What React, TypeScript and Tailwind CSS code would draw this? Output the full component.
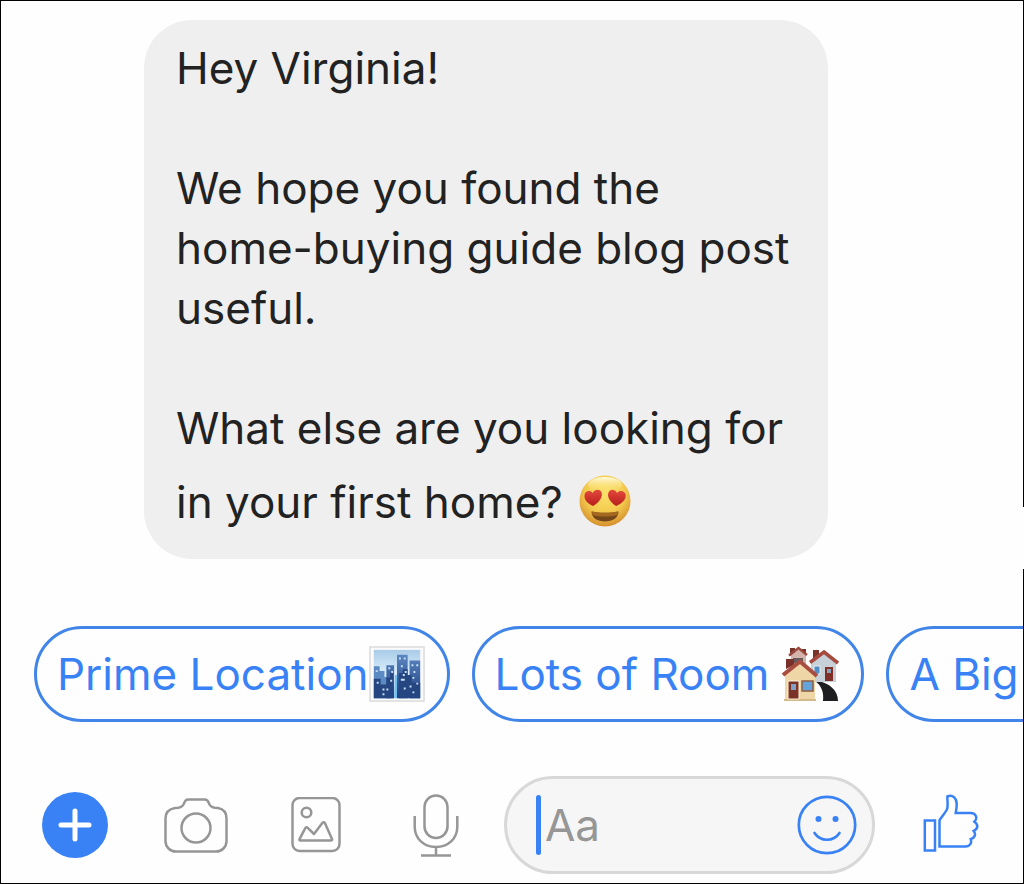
import { useState } from "react";

import type { ReactNode } from "react";

function HeartEyes() {
  return (
    <svg viewBox="0 0 52 52" role="img" aria-label="heart eyes" className="mt-[17px] ml-1 inline-block h-[52px] w-[52px] align-[-9px]">
      <defs>
        <radialGradient id="face" cx="50%" cy="35%" r="65%">
          <stop offset="0" stopColor="#fbe26a" />
          <stop offset="0.6" stopColor="#f3c94d" />
          <stop offset="1" stopColor="#d68f2e" />
        </radialGradient>
        <linearGradient id="shine" x1="0" y1="0" x2="0" y2="1">
          <stop offset="0" stopColor="#fffbe0" />
          <stop offset="1" stopColor="#fbe26a" stopOpacity="0" />
        </linearGradient>
        <linearGradient id="heart" x1="0" y1="0" x2="0" y2="1">
          <stop offset="0" stopColor="#e2483c" />
          <stop offset="1" stopColor="#b91f1c" />
        </linearGradient>
      </defs>
      <circle cx="26" cy="26" r="25.5" fill="url(#face)" />
      <ellipse cx="26" cy="10" rx="17" ry="8" fill="url(#shine)" />
      <path d="M13.500 31C7.500 28 4.500 23.500 5.800 19c1-3.800 6-4.500 8.200-1 2.200-3.900 7.500-3.900 8.800-.2 1.300 4.500-2.800 10-9.300 13.200z" fill="url(#heart)" transform="rotate(-4 14 22)" />
      <path d="M38 31c-6.500-3.200-10.200-8.600-8.800-13 1.300-3.800 6.300-3.900 8.600 0 2.500-3.500 7.500-2.700 8.600 1 1.200 4.400-2.500 9-8.400 12z" fill="url(#heart)" transform="rotate(4 38 22)" />
      <path d="M12.500 36.500c4 1 8 1.300 13.500 1.300s9.500-.3 13.500-1.300c0 6.500-6 10-13.500 10S12.500 43 12.500 36.500z" fill="#74471a" />
      <path d="M13 36.500c4 1 8 1.300 13 1.300s9-.3 13-1.300l-.5 3.500c-8 2-17 2-25 0z" fill="#a5681f" />
    </svg>
  );
}

function Cityscape() {
  return (
    <svg viewBox="0 0 58 58" aria-hidden="true" className="h-14 w-14 shrink-0">
      <defs>
        <linearGradient id="sky" x1="0" y1="0" x2="0" y2="1">
          <stop offset="0" stopColor="#a9cbe8" />
          <stop offset="0.5" stopColor="#dceffb" />
          <stop offset="1" stopColor="#8ed3f8" />
        </linearGradient>
        <linearGradient id="tower" x1="0" y1="0" x2="0" y2="1">
          <stop offset="0" stopColor="#5b86c2" />
          <stop offset="1" stopColor="#1f3f7f" />
        </linearGradient>
      </defs>
      <rect x="1" y="1" width="56" height="56" fill="#fafafa" stroke="#d9d9db" strokeWidth="1.500" />
      <rect x="5" y="4" width="48" height="50" fill="url(#sky)" />
      <path d="M5 54V21h6v5h5v6h6v22z" fill="#5c8bc4" />
      <path d="M18 54V20h8v34zM29 54V9h11v45zM42 54V15h11v39z" fill="url(#tower)" />
      <path d="M5 54V34h7v6h6v-7h4v-6h3v27zM31 54V28h4v-4h5v6h4v8h9v16z" fill="#254681" />
      <path d="M27 30h2v24h-2z" fill="#72bff0" />
      <g fill="#c7e0f6">
        <path d="M20 22h2v2h-2zM23 26h2v2h-2zM7 25h2v2H7zM31 12h2v2h-2zM36 12h2v2h-2zM33 20h2v2h-2zM37 26h2v2h-2zM44 19h2v2h-2zM49 19h2v2h-2zM46 26h2v2h-2zM45 32h2v2h-2zM49 38h2v2h-2z" />
        <path d="M8 37h2v2H8zM14 44h2v2h-2zM18 44h2v2h-2zM14 49h2v2h-2zM22 35h2v2h-2zM33 34h4v2h-4zM35 29h2v2h-2zM36 43h2v2h-2zM42 41h2v2h-2zM45 47h2v2h-2z" />
      </g>
    </svg>
  );
}

function Houses() {
  return (
    <svg viewBox="0 0 58 58" aria-hidden="true" className="h-[58px] w-[58px] shrink-0">
      <path d="M34 36c7 5 9 12 8 20h15c0-11-9-18-20-20z" fill="#1e1e20" />
      <path d="M9 11V3h5v5zM21 8V4h4v6z" fill="#7a332b" />
      <path d="M10 10l8-6 7 6v10H10z" fill="#d5b3aa" />
      <path d="M8 10.500L17.500 3 26 10" stroke="#99483e" strokeWidth="2.500" fill="none" />
      <path d="M12 13h10v5H12z" fill="#655c60" />
      <path d="M32 14V5h6v5z" fill="#7a332b" />
      <path d="M30 17L43 7l12 10v20H30z" fill="#c7d0d8" />
      <path d="M29 17.500L43 7l14 11" stroke="#a64a3f" strokeWidth="3.500" fill="none" />
      <path d="M33 21h6v8h-6z" fill="#4f8bc5" stroke="#eceef0" />
      <path d="M44 22h8v14h-8z" fill="#7d2f28" />
      <path d="M46 24h4v4h-4z" fill="#8aa1bc" />
      <path d="M5 24V14h8v6z" fill="#783029" />
      <path d="M4 30l15-13 15 14v25H4z" fill="#efd6a7" />
      <path d="M2 30L19 16.500 36 31" stroke="#a94d41" strokeWidth="4" fill="none" />
      <path d="M3 54h32v2H3z" fill="#d4b98b" />
      <path d="M7 36h11v18H7z" fill="#7b3328" stroke="#fff3d9" />
      <path d="M10 39h5v6h-5z" fill="#7da3cb" />
      <path d="M21 36h11v10H21z" fill="#64a3dc" stroke="#8f5d42" strokeWidth="1.500" />
    </svg>
  );
}

function PlusIcon() {
  return (
    <svg viewBox="0 0 66 66" className="h-[66px] w-[66px]" aria-hidden="true">
      <circle cx="33" cy="33" r="33" fill="#3982f5" />
      <path d="M33 19v28M19 33h28" stroke="#fff" strokeWidth="5" strokeLinecap="round" />
    </svg>
  );
}

function CameraIcon() {
  return (
    <svg viewBox="0 0 64 56" className="h-14 w-16" aria-hidden="true" fill="none" stroke="#969696" strokeWidth="2.500">
      <path d="M11 11c4 0 7-.5 8.500-3.500C21 4 21.500 2.500 24.500 2.500h16c3 0 3.500 1.500 5 5C47 10.500 50 11 54 11c5.500 1 8.500 5 8.500 10.500V44c0 6-4.500 10.500-10.500 10.500H12C6 54.500 1.500 50 1.500 44V21.500C1.500 16 5 12 11 11z" />
      <circle cx="32" cy="31" r="14.500" />
    </svg>
  );
}

function PictureIcon() {
  return (
    <svg viewBox="0 0 50 56" className="h-14 w-[50px]" aria-hidden="true" fill="none" stroke="#969696" strokeWidth="2.500" strokeLinejoin="round">
      <rect x="1.500" y="1" width="47" height="53" rx="7" />
      <circle cx="15.500" cy="15.500" r="4.800" />
      <path d="M8.500 42.200l5.800-11c.6-1 1.600-1.200 2.400-.4L23 37l8.500-11.200c.8-1 1.900-.8 2.400.3L41 42c.3.900-.1 1.500-1 1.500H9.300c-.8 0-1.200-.6-.8-1.300z" />
    </svg>
  );
}

function MicIcon() {
  return (
    <svg viewBox="0 0 46 64" className="h-16 w-[46px]" aria-hidden="true" fill="none" stroke="#969696" strokeWidth="2.500">
      <rect x="11.500" y="2.500" width="23" height="42.500" rx="11.500" />
      <path d="M1.700 23v10.500C1.700 46 11 54 23 54s21.300-8 21.300-20.500V23M23 54v8.500M8 62.500h30" />
    </svg>
  );
}

function SmileIcon() {
  return (
    <svg viewBox="0 0 60 60" className="h-[60px] w-[60px]" aria-hidden="true" fill="none" stroke="#3982f5" strokeWidth="2.700">
      <circle cx="30" cy="30" r="28.200" />
      <path d="M17.500 38c6 9 19 9 25 0" strokeLinecap="round" />
      <circle cx="21.500" cy="24" r="3" fill="#3982f5" stroke="none" />
      <circle cx="38.500" cy="24" r="3" fill="#3982f5" stroke="none" />
    </svg>
  );
}

function ThumbIcon() {
  return (
    <svg viewBox="0 0 56 62" className="h-[62px] w-14" aria-hidden="true" fill="none" stroke="#3982f5" strokeWidth="2.500">
      <path d="M1.800 26.500H12v30H1.800z" />
      <path d="M16.500 52.500V26.200c3.500-5 6-8 7.500-11 1.300-3.200.2-8.500.4-12.800 5.300-2 9 1.500 9.300 7.200.1 4-.4 6.500-1 9.400h15c5.300.1 7.300 5.300 3.700 8.700 4.200 2.800 3.700 7.300-.7 9.200 2.500 3.200 1.300 7-3 8.200 1.400 3.800-.7 7.100-4.700 7.400z" />
    </svg>
  );
}

type chipProps = {
  label: string;
  className: string;
  onSelect: (label: string) => void;
  children?: ReactNode;
};

function Chip({ label, className, onSelect, children }: chipProps) {
  return (
    <button
      type="button"
      onClick={() => onSelect(label)}
      className={`flex h-24 shrink-0 cursor-pointer items-center rounded-full border-[3px] border-[#4285e8] pr-[22px] pl-5 whitespace-nowrap text-[#3982f5] ${className}`}
    >
      <span>{label}</span>
      {children}
    </button>
  );
}

function App() {
  const [message, setMessage] = useState("");

  return (
    <main className="relative border border-black bg-[#fefefe] pt-[19px] pb-[9px] font-[Inter,'Liberation_Sans',sans-serif] text-[44px] leading-[60px] text-[#222]">
      {/* break in the right-hand frame line */}
      <div className="absolute top-[506px] -right-px h-[62px] w-px bg-white"></div>

      <section className="mr-4 ml-[143px] flex max-w-[684px] flex-col gap-[60px] rounded-[48px] bg-[#efefef] pt-[18px] pr-[30px] pb-[27px] pl-8">
        <p>Hey Virginia!</p>
        <p>We hope you found the home-buying guide blog post useful.</p>
        <p>
          What else are you looking for in your first home? <HeartEyes />
        </p>
      </section>

      <div className="mt-[67px] flex gap-[22px] overflow-hidden pl-[33px]">
        <Chip label="Prime Location" className="gap-0" onSelect={setMessage}>
          <Cityscape />
        </Chip>
        <Chip label="Lots of Room" className="gap-3" onSelect={setMessage}>
          <Houses />
        </Chip>
        <Chip label="A Big" className="w-64" onSelect={setMessage} />
      </div>

      <form onSubmit={(e) => e.preventDefault()} className="mt-[54px] flex items-center pr-11 pl-[41px]">
        <div className="mr-9 flex items-center gap-14">
          <button type="button" aria-label="More" className="cursor-pointer">
            <PlusIcon />
          </button>
          <button type="button" aria-label="Camera" className="cursor-pointer">
            <CameraIcon />
          </button>
          <button type="button" aria-label="Photos" className="flex w-16 cursor-pointer justify-center">
            <PictureIcon />
          </button>
          <button type="button" aria-label="Voice" className="flex w-16 cursor-pointer justify-center">
            <MicIcon />
          </button>
        </div>
        <label className="flex h-[98px] min-w-0 flex-1 items-center rounded-full border-[3px] border-[#d8d8d8] bg-[#f6f6f6] pr-[15px] pl-[29px]">
          <span className="mr-1 h-[60px] w-[5px] shrink-0 rounded-full bg-[#3982f5]"></span>
          <input
            type="text"
            aria-label="Message"
            placeholder="Aa"
            value={message}
            onChange={(e) => setMessage(e.target.value)}
            className="w-full min-w-0 flex-1 outline-none placeholder:text-[#969696]"
          />
          <button type="button" aria-label="Emoji" className="shrink-0 cursor-pointer">
            <SmileIcon />
          </button>
        </label>
        <button type="button" aria-label="Like" className="ml-12 shrink-0 cursor-pointer">
          <ThumbIcon />
        </button>
      </form>
    </main>
  );
}

export default App;
